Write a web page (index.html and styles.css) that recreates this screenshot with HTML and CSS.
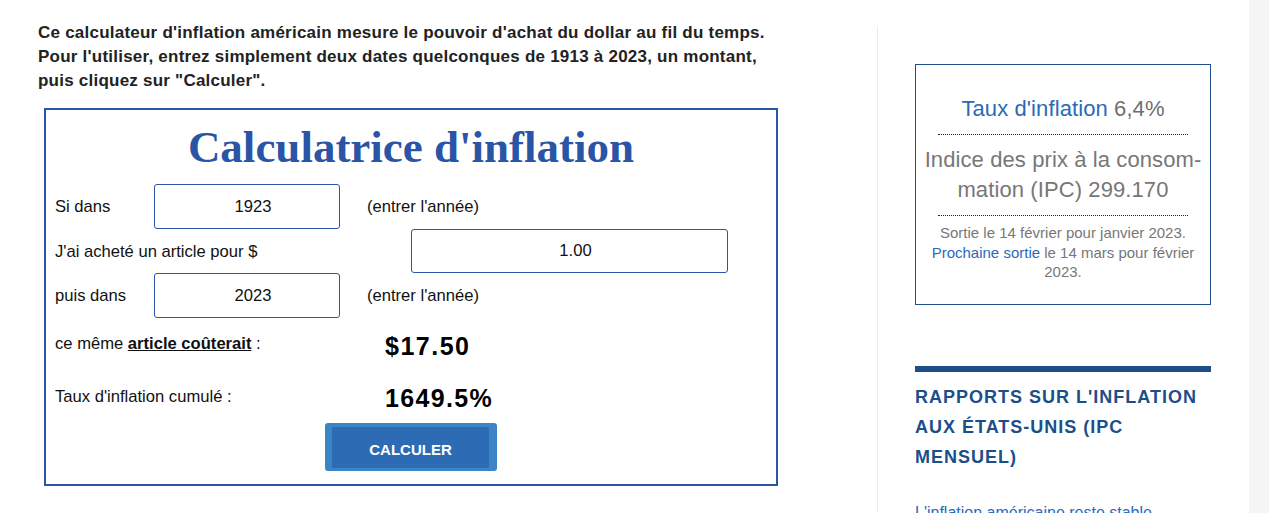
FILE: index.html
```html
<!DOCTYPE html>
<html lang="fr">
<head>
<meta charset="utf-8">
<title>Calculatrice d'inflation</title>
<link rel="stylesheet" href="styles.css">
</head>
<body>
<div class="page">
  <main class="main">
    <p class="intro">Ce calculateur d'inflation américain mesure le pouvoir d'achat du dollar au fil du temps.<br>Pour l'utiliser, entrez simplement deux dates quelconques de 1913 à 2023, un montant,<br>puis cliquez sur "Calculer".</p>
    <section class="calc">
      <h1 class="calc-title">Calculatrice d'inflation</h1>
      <div class="calc-grid">
        <span class="lbl r1">Si dans</span>
        <input class="field year r1" type="text" value="1923">
        <span class="hint r1">(entrer l'année)</span>

        <span class="lbl lbl-wide r2">J'ai acheté un article pour $</span>
        <input class="field amount r2" type="text" value="1.00">

        <span class="lbl r3">puis dans</span>
        <input class="field year r3" type="text" value="2023">
        <span class="hint r3">(entrer l'année)</span>

        <span class="lbl res-lbl r4">ce même <a class="ul" href="#">article coûterait</a> :</span>
        <span class="res r4">$17.50</span>

        <span class="lbl res-lbl r5">Taux d'inflation cumulé :</span>
        <span class="res r5">1649.5%</span>
      </div>
      <div class="btn-row"><button class="btn" type="button">CALCULER</button></div>
    </section>
  </main>
  <aside class="side">
    <div class="rate-box">
      <p class="rate"><a href="#">Taux d'inflation</a> 6,4%</p>
      <hr class="dots">
      <p class="cpi">Indice des prix à la consom-<br>mation (IPC) 299.170</p>
      <hr class="dots">
      <p class="release">Sortie le 14 février pour janvier 2023.<br><a href="#">Prochaine sortie</a> le 14 mars pour février 2023.</p>
    </div>
    <h2 class="side-head">RAPPORTS SUR L'INFLATION AUX ÉTATS-UNIS (IPC MENSUEL)</h2>
    <a class="side-link" href="#">L'inflation américaine reste stable</a>
  </aside>
  <div class="gutter"></div>
</div>
</body>
</html>
```
FILE: styles.css
```css
html, body {
  margin: 0;
  padding: 0;
  background: #fff;
  height: 100%;
  overflow: hidden;
}
body {
  font-family: "Liberation Sans", Arial, sans-serif;
  color: #111;
}
.page {
  display: flex;
  height: 513px;
}
.main {
  width: 839px;
  padding: 21px 0 0 38px;
  box-sizing: content-box;
  flex: none;
}
.intro {
  margin: 0;
  font-size: 17px;
  letter-spacing: 0.23px;
  font-weight: bold;
  line-height: 24px;
  color: #222;
  white-space: nowrap;
}
.calc {
  margin: 15px 0 0 6px;
  width: 734px;
  height: 378px;
  box-sizing: border-box;
  border: 2px solid #2a56a8;
  padding: 11px 0 0 9px;
}
.calc-title {
  margin: 0;
  font-family: "Liberation Serif", "Times New Roman", serif;
  font-size: 45px;
  line-height: 52px;
  font-weight: bold;
  color: #2a55a6;
  text-align: center;
  padding-right: 9px;
}
.calc-grid {
  margin-top: 11px;
  display: grid;
  grid-template-columns: 99px 186px 71px 317px;
  grid-template-rows: 45px 44px 45px 52px 52px;
  font-size: 16.6px;
}
.lbl {
  grid-column: 1;
  align-self: center;
  color: #111;
  margin-top: 1px;
  white-space: nowrap;
}
.r1 { grid-row: 1; }
.r2 { grid-row: 2; }
.r3 { grid-row: 3; }
.r4 { grid-row: 4; }
.r5 { grid-row: 5; }
.lbl-wide { grid-column: 1 / 4; }
.res-lbl { grid-column: 1 / 3; }
.r4.res-lbl { margin-top: -1px; }
.field {
  font-family: "Liberation Sans", Arial, sans-serif;
  font-size: 16.6px;
  color: #111;
  text-align: center;
  box-sizing: border-box;
  border: 1px solid #2a56a8;
  border-radius: 3px;
  background: #fff;
  padding: 0 0 0 12px;
  margin: 0;
  width: 100%;
  height: 45px;
}
.year { grid-column: 2; }
.amount { grid-column: 4; height: 44px; }
.hint {
  grid-column: 3 / 5;
  align-self: center;
  padding-left: 27px;
  color: #111;
  margin-top: 1px;
}
.res {
  grid-column: 3 / 5;
  padding-left: 45px;
  align-self: center;
  font-size: 25px;
  font-weight: bold;
  letter-spacing: 1.5px;
  color: #000;
}
.r4.res { margin-top: 4px; }
.r5.res { margin-top: 4px; letter-spacing: 1.35px; }
.ul {
  color: #111;
  font-weight: bold;
  text-decoration: underline;
}
.btn-row {
  display: flex;
  justify-content: center;
  padding-right: 9px;
  margin-top: 1px;
}
.btn {
  width: 172px;
  height: 48px;
  box-sizing: border-box;
  background: #2d6bb4;
  border-style: solid;
  border-color: #3b84c6;
  border-width: 4px 8px 3px 7px;
  border-radius: 3px;
  color: #fff;
  font-family: "Liberation Sans", Arial, sans-serif;
  font-weight: bold;
  font-size: 15px;
  padding: 3px 0 0;
}
.side {
  flex: none;
  width: 296px;
  margin-top: 26px;
  border-left: 1px solid #ececec;
  padding: 38px 38px 0 37px;
}
.rate-box {
  border: 1px solid #1f4f8e;
  padding: 29px 0 22px;
  text-align: center;
}
.rate-box a {
  color: #2a6ab8;
  text-decoration: none;
}
.rate {
  margin: 0 0 10px;
  font-size: 22px;
  letter-spacing: 0.1px;
  line-height: 30px;
  color: #6f6f6f;
}
.dots {
  margin: 0 22px;
  border: 0;
  border-top: 1px dotted #222;
  height: 0;
}
.cpi {
  margin: 10px 0;
  font-size: 22px;
  letter-spacing: 0.1px;
  line-height: 30px;
  color: #777;
}
.release {
  margin: 7px 0 0;
  padding: 0 14px;
  font-size: 15px;
  line-height: 19.5px;
  color: #777;
}
.side-head {
  margin: 61px 0 0;
  border-top: 6px solid #1c4f8a;
  padding-top: 10px;
  font-size: 18px;
  letter-spacing: 1px;
  line-height: 30px;
  font-weight: bold;
  color: #1c4f8a;
}
.side-link {
  display: block;
  margin-top: 31px;
  font-size: 16px;
  line-height: 20px;
  color: #2a6ab8;
  text-decoration: none;
  white-space: nowrap;
}
.gutter {
  flex: 1;
  background: #f5f5f5;
  margin-left: 0;
}
```
